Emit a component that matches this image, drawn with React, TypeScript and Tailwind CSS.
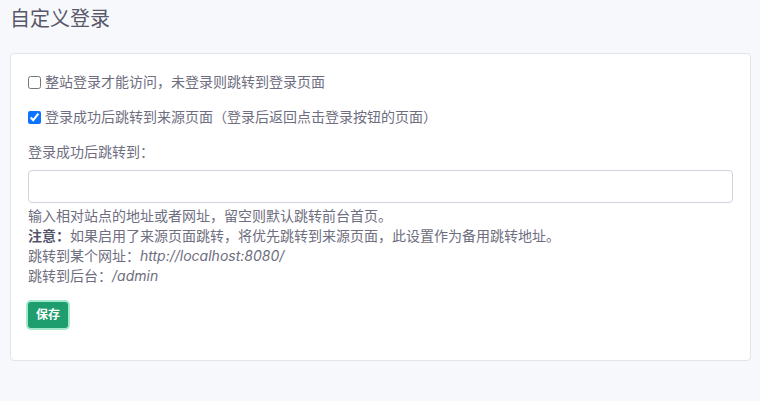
import React from "react";

export default function App() {
  return (
    <div
      className="min-h-[401px] w-full bg-[#f7f8fb] pt-[5px]"
      style={{ fontFamily: '"Inter", "Noto Sans CJK SC", sans-serif' }}
    >
      <h1 className="ml-[10px] text-[20px] leading-[28px] text-[#58586a] font-normal">
        自定义登录
      </h1>
      <div className="mt-[20px] ml-[10px] mr-[9px] rounded-[4px] border border-[#e3e3ea] bg-white px-[17px] pt-[18px] pb-[32px] text-[14px] leading-[20px] text-[#6e6e80]">
        <label className="flex items-center">
          <input type="checkbox" className="m-0 h-[13px] w-[13px] accent-[#0b73ff]" />
          <span className="ml-[4px]">整站登录才能访问，未登录则跳转到登录页面</span>
        </label>
        <label className="mt-[15px] flex items-center">
          <input type="checkbox" defaultChecked className="m-0 h-[13px] w-[13px] accent-[#0b73ff]" />
          <span className="ml-[4px]">登录成功后跳转到来源页面（登录后返回点击登录按钮的页面）</span>
        </label>
        <div className="mt-[15px]">登录成功后跳转到：</div>
        <input
          type="text"
          className="mt-[8px] block h-[33px] w-full rounded-[4px] border border-[#d4d1e0] bg-white px-2 outline-none"
        />
        <div className="mt-[3px]">
          <div>输入相对站点的地址或者网址，留空则默认跳转前台首页。</div>
          <div>
            <b className="font-bold text-[#55556a]">注意：</b>
            如果启用了来源页面跳转，将优先跳转到来源页面，此设置作为备用跳转地址。
          </div>
          <div>
            跳转到某个网址：<i className="italic">http://localhost:8080/</i>
          </div>
          <div>
            跳转到后台：<i className="italic">/admin</i>
          </div>
        </div>
        <div className="mt-[16px]">
          <button className="h-[26px] rounded-[3px] bg-[#1e9e6e] px-[8px] text-[12px] font-bold leading-[26px] text-white ring-[2px] ring-[#a3e8cb]">
            保存
          </button>
        </div>
      </div>
    </div>
  );
}
